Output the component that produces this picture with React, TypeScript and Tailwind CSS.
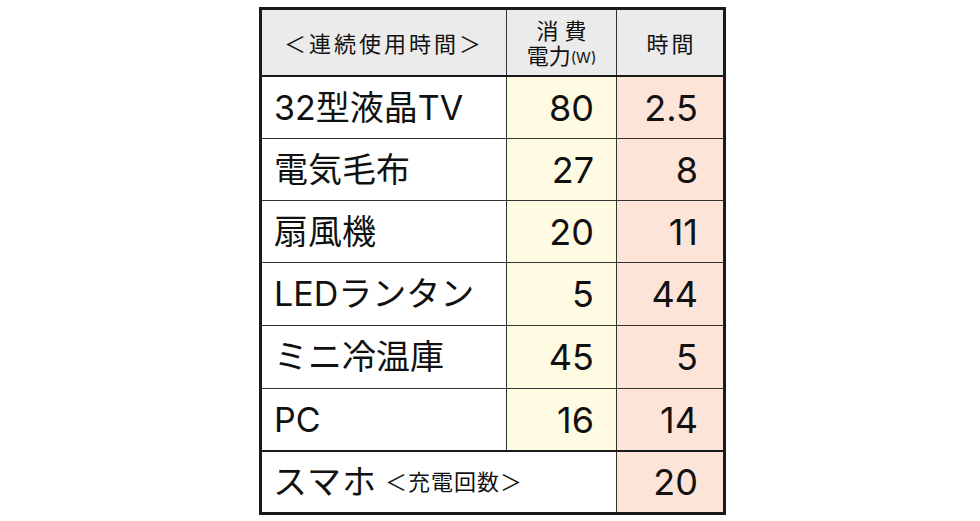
const rows = [
  { name: "32型液晶TV", watt: "80", hours: "2.5", h: "h-[62px] border-b border-[#333]" },
  { name: "電気毛布", watt: "27", hours: "8", h: "h-[62px] border-b border-[#333]" },
  { name: "扇風機", watt: "20", hours: "11", h: "h-[62px] border-b border-[#333]" },
  { name: "LEDランタン", watt: "5", hours: "44", h: "h-[63px] border-b border-[#333]" },
  { name: "ミニ冷温庫", watt: "45", hours: "5", h: "h-[63px] border-b border-[#333]" },
  { name: "PC", watt: "16", hours: "14", h: "h-[63px] border-b-2 border-[#1a1a1a]" },
];

const font = { fontFamily: 'Inter, "Noto Sans CJK JP", "Noto Sans", sans-serif' };

export default function App() {
  return (
    <div className="w-[980px] h-[521px] bg-white pt-[7px] pl-[259px]" style={font}>
      <div className="w-[467px] border-[3px] border-[#1a1a1a] text-[#111]">
        {/* header */}
        <div className="grid grid-cols-[245px_110px_106px] h-[67px] border-b-2 border-[#1a1a1a] bg-[#ebebeb]">
          <div className="flex items-center justify-center border-r border-[#333] pt-[4px] text-[22px] tracking-[3px]">
            ＜連続使用時間＞
          </div>
          <div className="flex flex-col items-center justify-center border-r border-[#333] pt-[3px] text-[22px] leading-[25px]">
            <span className="tracking-[6px] pl-[6px]">消費</span>
            <span className="flex items-end">
              電力<span className="text-[15px] leading-[23px]">(W)</span>
            </span>
          </div>
          <div className="flex items-center justify-center pt-[4px] text-[22px] tracking-[3px] pl-[3px]">
            時間
          </div>
        </div>

        {rows.map((r) => (
          <div key={r.name} className={`grid grid-cols-[245px_110px_106px] ${r.h}`}>
            <div className="flex items-center border-r border-[#333] pl-[12px] text-[34px] leading-none">
              {r.name}
            </div>
            <div className="flex items-center justify-end border-r border-[#333] bg-[#fffbe3] pr-[22px] text-[36px] leading-none">
              {r.watt}
            </div>
            <div className="flex items-center justify-end bg-[#fde4d8] pr-[25px] text-[36px] leading-none">
              {r.hours}
            </div>
          </div>
        ))}

        {/* last row */}
        <div className="grid grid-cols-[355px_106px] h-[60px]">
          <div className="flex items-center border-r border-[#333] pl-[11px]">
            <span className="text-[34px] leading-none tracking-[1px]">スマホ</span>
            <span className="ml-[8px] text-[22px] leading-none tracking-[1px]">＜充電回数＞</span>
          </div>
          <div className="flex items-center justify-end bg-[#fde4d8] pr-[25px] text-[36px] leading-none">
            20
          </div>
        </div>
      </div>
    </div>
  );
}
